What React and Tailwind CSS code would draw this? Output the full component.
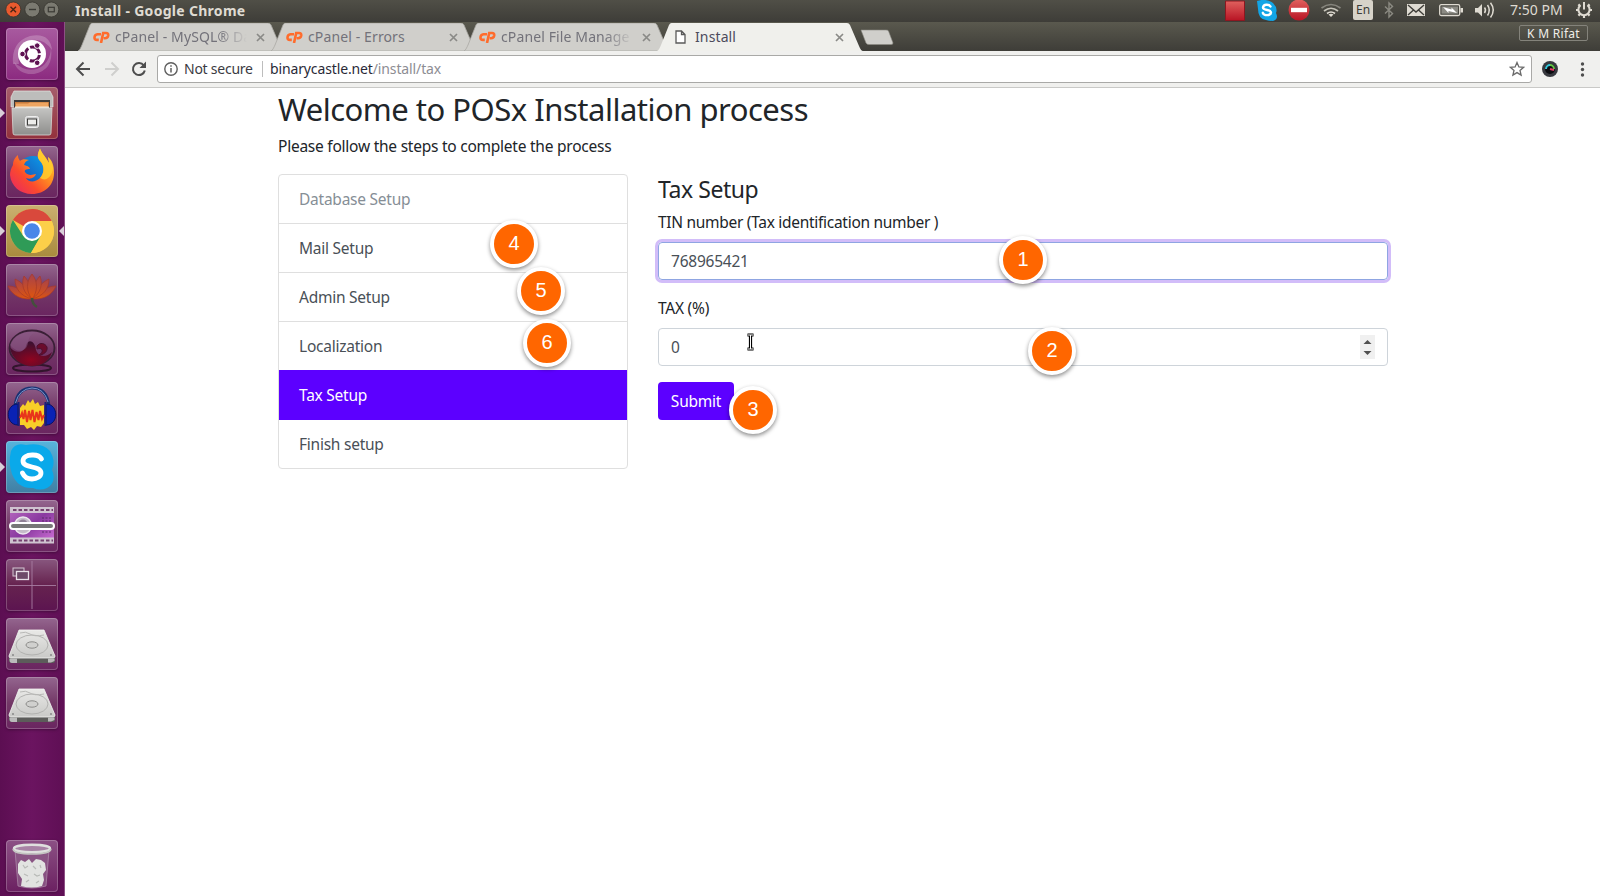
import React from 'react';

const Tile = ({ bg, left, right, children }) => (
  <div className="relative h-[52px] w-full shrink-0 px-1.5">
    {left && <span className="absolute left-0 top-[21px] h-0 w-0 border-y-[5px] border-l-[5px] border-y-transparent border-l-[#d9cfd8]" />}
    {right && <span className="absolute right-0 top-[21px] h-0 w-0 border-y-[5px] border-r-[5px] border-y-transparent border-r-[#d9cfd8]" />}
    <div className={`h-[52px] w-[52px] overflow-hidden rounded-[4px] shadow-[inset_0_0_0_1px_rgba(255,255,255,0.22),0_1px_3px_rgba(0,0,0,0.3)] ${bg}`}>
      <svg viewBox="0 0 52 52" className="block h-[52px] w-[52px]">{children}</svg>
    </div>
  </div>
);

const plum = 'bg-linear-to-b from-[#94668f] via-[#733867] to-[#6a2560]';

const Disk = () => (
  <>
    <path d="M13 12 H38 L49 38 V43 Q49 45 46 45 H6 Q3 45 3 42 V38 Z" fill="#5c5c5a" />
    <path d="M13 12 H38 L49 38 Q49 40 47 40 H5 Q3 40 3 38 Z" fill="url(#silver)" stroke="#f4f4f2" strokeWidth=".8" />
    <path d="M3.500 40.500 H11 V45 H6 Q3.500 45 3.500 42 Z M42 40.500 H48.500 V43 L45 44.500 H42 Z" fill="#bbb" />
    <ellipse cx="26" cy="27" rx="16" ry="10" fill="none" stroke="#b2b2b0" />
    <ellipse cx="26" cy="27" rx="6" ry="3.200" fill="#d0d0ce" stroke="#8c8c8a" />
    <path d="M14 15 Q20 13 24 16 T38 17" fill="none" stroke="#b9b9b7" />
    <circle cx="7" cy="37" r="1" fill="#888" /><circle cx="45" cy="37" r="1" fill="#888" />
  </>
);

const Defs = () => (
  <svg className="absolute h-0 w-0">
    <defs>
      <linearGradient id="silver" x1="0" y1="0" x2="0" y2="1"><stop offset="0" stopColor="#e9e9e7" /><stop offset="1" stopColor="#c9c9c7" /></linearGradient>
      <linearGradient id="cab" x1="0" y1="0" x2="0" y2="1"><stop offset="0" stopColor="#c4c4c2" /><stop offset="1" stopColor="#8e8e8c" /></linearGradient>
      <linearGradient id="fox" x1="0" y1="1" x2="1" y2="0"><stop offset="0" stopColor="#e5226b" /><stop offset=".35" stopColor="#fb4a2d" /><stop offset=".65" stopColor="#ff9a1f" /><stop offset="1" stopColor="#ffe14a" /></linearGradient>
      <linearGradient id="globe" x1="0" y1="1" x2="1" y2="0"><stop offset="0" stopColor="#1b3fa8" /><stop offset="1" stopColor="#0aa5f0" /></linearGradient>
      <linearGradient id="lotus" x1="0" y1="0" x2="0" y2="1"><stop offset="0" stopColor="#a8424a" /><stop offset="1" stopColor="#e0560c" /></linearGradient>
      <radialGradient id="orb" cx=".5" cy=".75" r=".7"><stop offset="0" stopColor="#8f0420" /><stop offset="1" stopColor="#3c1030" /></radialGradient>
      <linearGradient id="film" x1="0" y1="0" x2="1" y2="1"><stop offset="0" stopColor="#b868c0" /><stop offset=".5" stopColor="#8a3aa0" /><stop offset="1" stopColor="#d072d8" /></linearGradient>
      <linearGradient id="red" x1="0" y1="0" x2="0" y2="1"><stop offset="0" stopColor="#e0615e" /><stop offset="1" stopColor="#b81424" /></linearGradient>
    </defs>
  </svg>
);

const Launcher = () => (
  <aside className="flex w-[65px] shrink-0 flex-col gap-[7px] border-r border-[#8d5084] bg-[#65105a] bg-linear-to-r from-[#5c0e52] via-[#6b1460] to-[#5f0f55] pt-1.5">
    <Tile bg="bg-linear-to-b from-[#a85a9f] to-[#8c2a80]">
      <path d="M7 36 Q5 14 24 8 Q44 4 46 22 Q36 8 22 13 Q10 19 13 36Z" fill="#fff" opacity=".22" />
      <path d="M45 20 Q48 42 28 46 Q12 47 8 34 Q18 44 31 41 Q44 36 45 20Z" fill="#fff" opacity=".2" />
      <circle cx="26" cy="26" r="14" fill="#fff" />
      <circle cx="26.500" cy="26" r="7" fill="none" stroke="#5e1252" strokeWidth="3" strokeDasharray="12.600 2.060" strokeDashoffset="-1" />
      <g fill="#5e1252" stroke="#fff" strokeWidth="1"><circle cx="16.500" cy="26" r="2.800" /><circle cx="31.200" cy="17.600" r="2.800" /><circle cx="31.200" cy="34.800" r="2.800" /></g>
    </Tile>
    <Tile left bg="bg-linear-to-b from-[#a55d6c] to-[#93303c]">
      <path d="M8 4 H44 L47 10 V20 H5 V10Z" fill="#bdbdbb" stroke="#e4e4e2" strokeWidth=".7" />
      <rect x="8" y="13" width="36" height="8" fill="#3d3a38" />
      <path d="M9 15 H43 V22 H9Z" fill="#c77a3c" /><path d="M10 16.500 H22 L24 15.500 H42 V22 H10Z" fill="#eea561" /><path d="M9 19.500 H43 V22 H9Z" fill="#f4ead9" />
      <path d="M6 21 H46 L45 46 Q45 48 43 48 H9 Q7 48 7 46Z" fill="url(#cab)" stroke="#d8d8d6" strokeWidth=".8" />
      <rect x="19.500" y="29.500" width="13" height="11" rx="2" fill="#ccc" stroke="#eee" /><rect x="21.500" y="32" width="9" height="6" fill="#ededeb" stroke="#3e3e3c" />
    </Tile>
    <Tile bg={plum}>
      <circle cx="27" cy="26" r="16" fill="url(#globe)" />
      <path d="M34 2.500 C31 8 31 12 34 15 C39 20 38 28 34 32 C29 37 22 36 20 32 C25 34 29 31 30 28 C26 29 22 30 19 26 C18 24 20 23 24 23 C23 20 21 20 18 19 C19 16 20 15 23 14 C19 13 16 13 14 15 C12 12 12 11 12 9 C8 12 7 16 7 19 C5 22 4 26 4 29 C5 40 14 48 26 48 C39 48 48 39 48 27 C48 19 46 14 42 11 C42 13 43 15 43 17 C40 11 36 8 34 2.500Z" fill="url(#fox)" />
      <path d="M34 2.500 C31 9 31 12 35 16 C39 21 38 28 34 32 C40 36 46 31 47 22 C46 17 44 13 42 11 L43 17 C40 11 36 8 34 2.500Z" fill="#ffd32e" opacity=".75" />
    </Tile>
    <Tile left right bg="bg-linear-to-b from-[#cbb070] to-[#a98b3d]">
      <circle cx="26" cy="26" r="22" fill="#f8ca45" />
      <path d="M26 26 L6.950 15 A22 22 0 0 1 45.050 15Z" fill="#d9493c" /><path d="M26 4 A22 22 0 0 1 45.050 15 L45.500 16 H26Z" fill="#d9493c" />
      <path d="M6.950 15 A22 22 0 0 0 25 48 L35 31 L26 36 L17.300 31Z" fill="#2f9b57" />
      <path d="M26 16 H45.600 A22 22 0 0 1 25 48 L34.700 31Z" fill="#fccf49" />
      <circle cx="26" cy="26" r="10" fill="#fff" /><circle cx="26" cy="26" r="7.800" fill="#4a86e8" />
    </Tile>
    <Tile bg={plum}>
      <g fill="url(#lotus)" stroke="#a83a26" strokeWidth=".7">
        <path d="M26 35 C12 36 5 29 2 22 C10 22 16 26 26 35Z" /><path d="M26 35 C40 36 47 29 50 22 C42 22 36 26 26 35Z" />
        <path d="M26 35 C14 32 9 24 9 15 C16 18 22 25 26 35Z" /><path d="M26 35 C38 32 43 24 43 15 C36 18 30 25 26 35Z" />
        <path d="M26 35 C17 29 15 20 18 12 C23 17 26 25 26 35Z" /><path d="M26 35 C35 29 37 20 34 12 C29 17 26 25 26 35Z" />
        <path d="M26 35 C20 28 20 17 26 10 C32 17 32 28 26 35Z" />
      </g>
      <path d="M26 34 Q26 40 31 43" fill="none" stroke="#43503c" strokeWidth="2.500" />
    </Tile>
    <Tile bg={plum}>
      <ellipse cx="26" cy="45" rx="19" ry="3.500" fill="none" stroke="#24101f" strokeWidth="2" opacity=".8" />
      <ellipse cx="26" cy="25" rx="22.500" ry="17.500" fill="none" stroke="#3a1f36" strokeWidth="1.800" />
      <path d="M4 24 C10 32 18 29 20 23 C22 15 29 18 30 27 C32 34 40 35 46 29 C43 39 35 43 26 43 C15 43 5 35 4 24Z" fill="url(#orb)" />
      <path d="M4 22 C8 10 20 8 30 9 C20 13 24 20 20 25 C15 30 9 28 4 22Z" fill="#8a5a85" opacity=".5" />
      <path d="M31 23 C34 19 39 20 41 24 C42 29 37 32 33 32 C38 29 37 24 31 26Z" fill="#6a0b2c" stroke="#4a1030" />
    </Tile>
    <Tile bg={plum}>
      <path d="M9 24 Q11 6 26 6 Q41 6 43 24" fill="none" stroke="#1a3272" strokeWidth="3" /><path d="M9.500 21 Q13 7 26 6 Q38 6 42 20" fill="none" stroke="#7c93c9" strokeWidth="1" />
      <path d="M12 22 C-1 22 -1 43 12 43Z M40 22 C53 22 53 43 40 43Z" fill="#0a22b4" stroke="#071264" />
      <path d="M12.500 20 V44 M39.500 20 V44" stroke="#16207a" strokeWidth="2" />
      <path d="M14 26 L17 22 L19 24 L22 18 L24 21 L27 17 L29 22 L32 20 L34 24 L38 23 V41 L35 45 L31 44 L28 48 L25 45 L21 47 L18 43 L14 43Z" fill="#f8cf28" />
      <path d="M14 36 L16 31 L17.500 37 L19 28 L21 40 L23 29 L24.500 38 L26.500 28 L28.500 40 L30.500 30 L32.500 38 L34 29 L36 37 L38 33" fill="none" stroke="#e8351b" strokeWidth="2" />
    </Tile>
    <Tile left bg="bg-linear-to-b from-[#58b4dc] to-[#407fa4]">
      <path d="M5 10 Q9 1 20 4 Q36 1 44 10 Q50 20 46 29 Q51 41 41 47 Q34 50 27 47 Q12 48 6 33 Q2 22 5 10Z" fill="#0aa9ea" />
      <path d="M35.500 18 C33 13.500 29 14 26 14 C20.500 14 17 16.500 17 20 C17 28 35 24 35 32 C35 35.500 31 38 26 38 C20 38 18 35.500 16.500 32" fill="none" stroke="#fff" strokeWidth="4.800" strokeLinecap="round" />
    </Tile>
    <Tile bg={plum}>
      <rect x="4" y="7" width="44" height="36" fill="url(#film)" /><rect x="4" y="7" width="44" height="6" fill="#cfc3d0" /><rect x="4" y="37.500" width="44" height="6" fill="#cfc3d0" />
      <path d="M7 10 H47 M7 40.500 H47" stroke="#74406f" strokeWidth="2" strokeDasharray="3.500 2" />
      <circle cx="17" cy="25.500" r="8.500" fill="#c5bcc9" stroke="#ece6ee" strokeWidth="1.500" /><circle cx="17" cy="24" r="4.500" fill="#8f8095" />
      <path d="M36 18 H46 M36 21 H46 M36 32 H46" stroke="#5a2a68" strokeDasharray="2 1.500" />
      <rect x="4" y="23" width="44" height="6" rx="3" fill="#777" stroke="#fff" strokeWidth="2" />
    </Tile>
    <Tile bg="bg-linear-to-b from-[#88577f] via-[#66224f] to-[#5c1450]">
      <path d="M26 2 V50 M2 26.500 H50" stroke="#a77da2" strokeWidth=".9" />
      <rect x="7" y="9" width="11" height="8" fill="#6e4a69" stroke="#d5c6d3" /><rect x="10.500" y="12.500" width="12" height="8" fill="#6e4a69" stroke="#e8dfe7" strokeWidth="1.300" />
    </Tile>
    <Tile bg={plum}><Disk /></Tile>
    <Tile bg={plum}><Disk /></Tile>
    <div className="grow" />
    <div className="pb-1">
      <Tile bg="bg-linear-to-b from-[#8c5085] to-[#6b2061]">
        <path d="M9 10 H43 L40 46 Q26 50 12 46Z" fill="#8d5a88" opacity=".8" stroke="#b79ab5" strokeWidth=".8" />
        <path d="M12 24 L15 20 L19 22 L23 19 L26 23 L30 19 L35 20 L39 23 L40 30 L37 34 L38 40 L36 46 Q26 49 15 46 L16 39 L12 33Z" fill="#e2e3e1" />
        <path d="M17 25 L19 28 L22 26 M27 26 L30 29 M34 25 L35 28 M18 34 L22 36 M28 34 L31 36 L34 35 M20 42 L23 40 M30 43 L33 41" fill="none" stroke="#b8bab7" strokeWidth="1.200" />
        <ellipse cx="26" cy="8.500" rx="18" ry="3.800" fill="#a883a5" stroke="#dfe0de" strokeWidth="2.500" />
        <path d="M7 9 Q8 14 26 14 Q44 14 45 9" fill="none" stroke="#c4c5c2" strokeWidth="1.600" />
      </Tile>
    </div>
  </aside>
);

const Status = () => (
  <svg width="380" height="22" viewBox="1220 0 380 22" className="block">
    <path d="M1225.500 1 H1244.500 V20.500 H1225.500Z" fill="url(#red)" stroke="#8c1720" />
    <path d="M1257 1 Q1266 -2 1273 3 Q1278 8 1276 13 Q1279 19 1273 21 Q1269 21 1266 20 Q1258 19 1258 9Z" fill="#12a5e6" />
    <path d="M1270.500 6.500 C1269 4 1263.500 4 1263 7.500 C1263 11 1271 9 1271 12.500 C1270.500 16 1264 16 1262.800 12.800" fill="none" stroke="#fff" strokeWidth="2.400" strokeLinecap="round" />
    <circle cx="1299" cy="10" r="10.500" fill="url(#red)" /><rect x="1291" y="7.800" width="16" height="4.400" fill="#fff" />
    <g fill="none" strokeWidth="1.700"><path d="M1321.500 8 Q1331 1 1340.500 8" stroke="#86857d" /><path d="M1324 11 Q1331 5.500 1338 11" stroke="#c5c3b9" /><path d="M1327 13.500 Q1331 10.500 1335 13.500" stroke="#dfdbd2" /></g><path d="M1328.500 14.500 L1331 17 L1333.500 14.500 Q1331 12.800 1328.500 14.500Z" fill="#dfdbd2" />
    <rect x="1353" y="0" width="20" height="20" rx="2" fill="#d7d3c9" />
    <path d="M1385 6.500 L1392.500 13.500 L1389 17 V3 L1392.500 6.500 L1385 13.500" fill="none" stroke="#8b8a82" strokeWidth="1.400" />
    <rect x="1407" y="4" width="18" height="12" fill="#dfdbd2" /><path d="M1408 5 L1416 12 L1424 5 M1408 15 L1413.500 10 M1424 15 L1418.500 10" fill="none" stroke="#3f3e39" strokeWidth="1.400" />
    <rect x="1439.700" y="4.700" width="20" height="10.800" rx="1.500" fill="none" stroke="#dfdbd2" strokeWidth="1.300" /><rect x="1441.500" y="6.500" width="16.500" height="7.200" fill="#8b8a83" /><path d="M1460.500 8 H1463 V12.500 H1460.500Z" fill="#dfdbd2" /><path d="M1443 7 L1451.500 9.500 V7.500 L1457 13 L1448.500 11 V13Z" fill="#fff" />
    <path d="M1475 8 H1478 L1482 4 V16.500 L1478 12.500 H1475Z" fill="#dfdbd2" /><path d="M1484.500 7.500 Q1486.500 10 1484.500 13 M1487.500 5 Q1491 10 1487.500 15.500 M1490.500 2.800 Q1496 10 1490.500 17.500" fill="none" stroke="#dfdbd2" strokeWidth="1.500" />
    <g stroke="#dfdbd2" fill="none"><path d="M1580.500 5.300 A5.600 5.600 0 1 0 1587.500 5.300" strokeWidth="2" /><path d="M1584 2 V9.500" strokeWidth="2" /><path d="M1576 10 H1578 M1590 10 H1592 M1578.400 4.400 L1580 6 M1589.600 4.400 L1588 6 M1578.400 15.600 L1580 14 M1589.600 15.600 L1588 14 M1584 16 V18" strokeWidth="2.200" /></g>
  </svg>
);

const Cp = () => (
  <svg width="17" height="12" viewBox="0 0 17 12" className="shrink-0" fill="none" stroke="#ff6c2c" strokeWidth="2.600">
    <path d="M8 3.200 H4.500 Q1.800 3.600 1.500 6.300 Q1.300 8.900 4 8.900 H5.800" /><path d="M8 12 L10.200 2 H13 Q15.500 2 15.200 4.500 Q14.700 7.200 12 7.200 H10.700" />
  </svg>
);

const X = () => (
  <svg width="9" height="9" viewBox="0 0 9 9" className="shrink-0"><path d="M1 1 L8 8 M8 1 L1 8" stroke="#8a8a87" strokeWidth="1.700" /></svg>
);

const Tab = ({ title, active, fade }) => (
  <div className={`relative flex h-[28px] w-[206px] shrink-0 items-center pl-[15px] pr-[19px] ${active ? 'z-10' : '-mr-[13px]'}`}>
    <svg viewBox="0 0 206 28" className="absolute inset-0 h-[28px] w-[206px]">
      <path d="M0 28 C2 27 3 24 4 22 L12 2 Q13 0 14.500 0 H190 Q192 0 193 2 L202 23 Q204 28 206 28Z" fill={active ? '#f0f0ec' : '#d0cfcb'} stroke={active ? 'none' : '#a9a8a3'} strokeWidth=".8" />
    </svg>
    <div className="relative flex w-full items-center">
      {active ? (
        <svg width="11" height="14" viewBox="0 0 11 14" className="ml-[3px] mr-[9px] shrink-0"><path d="M1 1 H6.500 L10 4.500 V13 H1Z M6.500 1 V4.500 H10" fill="#fff" stroke="#5a5a5a" strokeWidth="1.300" /></svg>
      ) : <span className="mr-[5px] flex"><Cp /></span>}
      <span className={`w-[132px] overflow-hidden whitespace-nowrap text-[14px] leading-[20px] tracking-[0.12px] ${active ? 'text-[#4c4b5c]' : 'text-[#73727a]'} ${fade ? '[mask-image:linear-gradient(to_right,black_78%,transparent_100%)]' : ''}`}>{title}</span>
      <span className="ml-auto flex"><X /></span>
    </div>
  </div>
);

const Badge = ({ n, pos }) => (
  <div className={`absolute flex h-12 w-12 items-center justify-center rounded-full border-4 border-white bg-[#ff6600] pb-0.5 font-['Liberation_Sans',sans-serif] text-[20px] text-white shadow-[0_2px_4px_rgba(0,0,0,0.45)] ${pos}`}>{n}</div>
);

const steps = [
  ['Database Setup', 'h-[49px] border-b border-[#dfdfdf] text-[#868e96]'],
  ['Mail Setup', 'h-[49px] border-b border-[#dfdfdf] text-[#495057]'],
  ['Admin Setup', 'h-[49px] border-b border-[#dfdfdf] text-[#495057]'],
  ['Localization', 'h-[49px] pb-0.5 text-[#495057]'],
  ['Tax Setup', '-mx-px -mt-px h-[50px] bg-[#5c00ff] pl-[21px] text-white'],
  ['Finish setup', 'h-[48px] text-[#495057]'],
];

export default function App() {
  return (
    <div className="flex h-[896px] w-[1600px] flex-col overflow-hidden bg-white font-['Noto_Sans','Open_Sans',sans-serif]">
      <Defs />
      <header className="flex h-[22px] shrink-0 items-center justify-between bg-linear-to-b from-[#504f47] to-[#3e3d38] text-[#dfdbd2]">
        <div className="flex items-center">
          <svg width="64" height="22" viewBox="0 0 64 22"><circle cx="13.300" cy="9.500" r="7.500" fill="#e95a2e" stroke="#36352f" strokeWidth=".8" /><path d="M10.500 6.700 L16 12.200 M16 6.700 L10.500 12.200" stroke="#4a2414" strokeWidth="1.400" /><circle cx="32.300" cy="9.500" r="7.500" fill="#7b7a71" stroke="#36352f" strokeWidth=".8" /><path d="M29 9.500 H36" stroke="#3b3a35" strokeWidth="1.400" /><circle cx="51.300" cy="9.500" r="7.500" fill="#7b7a71" stroke="#36352f" strokeWidth=".8" /><rect x="48.300" y="7.300" width="6" height="4.500" fill="none" stroke="#3b3a35" strokeWidth="1.200" /></svg>
          <span className="-mt-px ml-[11px] text-[14px] font-bold leading-[20px] tracking-[0.3px]">Install - Google Chrome</span>
        </div>
        <div className="relative">
          <Status />
          <span className="absolute left-[136px] top-0 text-[12px] leading-[20px] text-[#3c3b37]">En</span>
          <span className="absolute left-[290px] top-0 whitespace-nowrap text-[14px] leading-[20px]">7:50 PM</span>
        </div>
      </header>
      <div className="flex min-h-0 grow">
        <Launcher />
        <div className="flex min-w-0 grow flex-col">
          <div className="flex h-[29px] shrink-0 items-start bg-linear-to-b from-[#5a594e] to-[#3e3d38] pl-[13px] pt-px">
            <Tab title="cPanel - MySQL® Da" fade />
            <Tab title="cPanel - Errors" />
            <Tab title="cPanel File Manage" fade />
            <Tab title="Install" active />
            <svg width="34" height="16" viewBox="0 0 34 16" className="-ml-[3px] mt-[6px]"><path d="M1 1 H26 Q28 1 28.500 2 L33 14 Q33 15.500 31 15.500 H9 Q7 15.500 6 14Z" fill="#d0cfcb" stroke="#8b8a83" strokeWidth=".6" /></svg>
            <div className="ml-auto mr-3 mt-[2px] flex h-[16px] w-[69px] items-center justify-center rounded-[2px] border border-[#84837b] pt-px text-[12px] leading-none tracking-[0.3px] text-[#f0eee8]">K M Rifat</div>
          </div>
          <div className="flex h-[37px] shrink-0 items-center border-b border-[#c9c9c7] bg-[#f0f0ee]">
            <svg width="92" height="36" viewBox="65 51 92 36" fill="none" strokeWidth="2" className="shrink-0"><path d="M90 69 H77.500 M83.500 62.500 L77 69 L83.500 75.500" stroke="#4d4d4d" /><path d="M105 69 H117.500 M111.500 62.500 L118 69 L111.500 75.500" stroke="#cfcfcd" /><path d="M143.800 65.500 A6 6 0 1 0 144.800 70.500" stroke="#4d4d4d" /><path d="M146 61.500 V68 H139.500Z" fill="#4d4d4d" /></svg>
            <div className="flex h-[28px] w-[1375px] shrink-0 items-center rounded-[3px] border border-[#a9a9a7] bg-white px-[6px] text-[14px] leading-[20px]">
              <svg width="14" height="14" viewBox="0 0 14 14"><circle cx="7" cy="7" r="6.200" fill="none" stroke="#5f5f5f" strokeWidth="1.400" /><path d="M7 6 V10.500 M7 3.300 V4.800" stroke="#5f5f5f" strokeWidth="1.500" /></svg>
              <span className="ml-[6px] w-[78px] whitespace-nowrap tracking-[-0.25px] text-[#3b3b43]">Not secure</span>
              <span className="h-4 w-px bg-[#bdbdbd]" />
              <span className="ml-[7px] whitespace-nowrap tracking-[-0.13px] text-[#2a2a38]">binarycastle.net<span className="text-[#8d8d93]">/install/tax</span></span>
              <svg width="16" height="16" viewBox="0 0 16 16" className="ml-auto"><path d="M8 1.500 L9.900 6 L14.600 6.300 L11 9.400 L12.100 14.100 L8 11.600 L3.900 14.100 L5 9.400 L1.400 6.300 L6.100 6Z" fill="none" stroke="#6a6a6a" strokeWidth="1.300" /></svg>
            </div>
            <svg width="68" height="36" viewBox="1532 51 68 36"><circle cx="1550" cy="69" r="8" fill="#37393f" /><circle cx="1550" cy="69" r="5" fill="#0b0b10" /><path d="M1546 69 A4 4 0 0 1 1550 65" stroke="#35c6d8" strokeWidth="2" fill="none" /><path d="M1550 65 A4 4 0 0 1 1554 69" stroke="#62c244" strokeWidth="2" fill="none" /><path d="M1550 69 L1554 70" stroke="#e23a66" strokeWidth="2" /><g fill="#4d4d4d"><circle cx="1582.500" cy="64" r="1.700" /><circle cx="1582.500" cy="69.500" r="1.700" /><circle cx="1582.500" cy="75" r="1.700" /></g></svg>
          </div>
          <main className="relative flex grow flex-col pl-[213px] text-[15.5px] leading-[24px] tracking-[-0.24px] text-[#212529]">
            <h1 className="mt-[1px] whitespace-nowrap text-[31px] leading-[40px] tracking-[-0.5px]">Welcome to POSx Installation process</h1>
            <p className="mt-[5px]">Please follow the steps to complete the process</p>
            <div className="mt-4 flex items-start gap-[30px]">
              <ul className="w-[350px] overflow-hidden rounded-[4px] border border-[#dfdfdf]">
                {steps.map(([s, c]) => (
                  <li key={s} className={`flex items-center px-5 ${c}`}>{s}</li>
                ))}
              </ul>
              <div className="w-[730px]">
                <h4 className="mt-px text-[23px] leading-[29px] tracking-[-0.45px]">Tax Setup</h4>
                <label className="mt-1.5 block tracking-[-0.29px]">TIN number (Tax identification number )</label>
                <div className="mt-2 flex h-[38px] items-center rounded-[4px] border border-[#8fa5e2] px-3 text-[#495057] shadow-[0_0_0_3px_#d2bdf9]">768965421</div>
                <label className="mt-4 block">TAX (%)</label>
                <div className="mt-2 flex h-[38px] items-center justify-between rounded-[4px] border border-[#ced4da] px-3 text-[#495057]">0
                  <svg width="15" height="24" viewBox="0 0 15 24"><rect width="15" height="24" fill="#f0f0f0" /><path d="M3.500 9 L7.500 5 L11.500 9Z M3.500 16 L7.500 20 L11.500 16Z" fill="#505050" /></svg>
                </div>
                <button className="mt-4 h-[38px] w-[76px] rounded-[4px] bg-[#5c00ff] text-white">Submit</button>
              </div>
            </div>
            <Badge n="1" pos="left-[934px] top-[148px]" />
            <Badge n="2" pos="left-[963px] top-[239px]" />
            <Badge n="3" pos="left-[664px] top-[298px]" />
            <Badge n="4" pos="left-[425px] top-[132px]" />
            <Badge n="5" pos="left-[452px] top-[179px]" />
            <Badge n="6" pos="left-[458px] top-[231px]" />
            <svg width="9" height="18" viewBox="0 0 9 18" className="absolute left-[681px] top-[245px]"><path d="M1.500 2 H7.500 M1.500 16 H7.500 M4.500 2 V16" stroke="#000" strokeWidth="3.200" /><path d="M2 2 H7 M2 16 H7 M4.500 2 V16" stroke="#fff" strokeWidth="1" /></svg>
          </main>
        </div>
      </div>
    </div>
  );
}
